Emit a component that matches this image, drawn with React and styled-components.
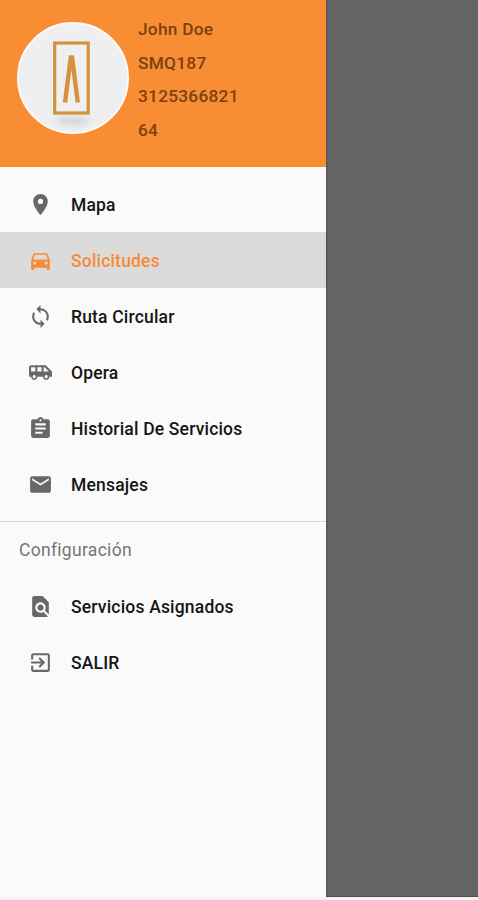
import styled, { createGlobalStyle } from "styled-components";
import {
  MdPlace, MdDirectionsCar, MdLoop, MdAirportShuttle,
  MdAssignment, MdEmail, MdFindInPage, MdExitToApp
} from "react-icons/md";

const GlobalStyle = createGlobalStyle`
  * {
    box-sizing: border-box;
  }

  body {
    margin: 0;
    background: #f2f2f2;
    font-family: Roboto, sans-serif;
  }
`;

const Screen = styled.div`
  display: flex;
  height: 897px;
  background: #646464;
  border-bottom: 1px solid #505050;
`;

const Drawer = styled.aside`
  width: 326px;
  height: 897px;
  background: #fafafa;
  box-shadow: 0 0 2px rgba(0, 0, 0, 0.5);
`;

const Header = styled.header`
  display: flex;
  gap: 9px;
  height: 167px;
  padding: 12px 0 0 17px;
  background: #f98d33;
`;

const Avatar = styled.div`
  width: 112px;
  height: 112px;
  margin-top: 9.5px;
  border: 2px solid #fffaf4;
  border-radius: 50%;
  background: #eeeff1;
  overflow: hidden;
`;

const UserInfo = styled.div`
  display: flex;
  flex-direction: column;
`;

const UserLine = styled.span`
  height: 33.7px;
  line-height: 34px;
  font-size: 17.3px;
  font-weight: 500;
  letter-spacing: 0.25px;
  color: #7a4115;
`;

const Menu = styled.nav`
  padding: ${({ $first }) => ($first ? "9px 0" : "0")};
`;

const Item = styled.a`
  display: flex;
  align-items: center;
  gap: 18.5px;
  height: 56px;
  padding: 1px 0 0 27.5px;
  font-size: 17.5px;
  font-weight: 500;
  letter-spacing: 0.18px;
  color: ${({ $active }) => ($active ? "#f68b38" : "#151515")};
  background: ${({ $active }) => ($active ? "#dbdbdb" : "transparent")};

  svg {
    width: 25px;
    height: 25px;
    color: ${({ $active }) => ($active ? "#f68b38" : "#686868")};
  }
`;

const Section = styled.div`
  height: 57px;
  padding-left: 19px;
  border-top: 1px solid #d9d9d9;
  line-height: 57px;
  font-size: 17.5px;
  letter-spacing: 0.3px;
  color: #757575;
`;

const mainItems = [
  { label: "Mapa", icon: MdPlace },
  { label: "Solicitudes", icon: MdDirectionsCar, active: true },
  { label: "Ruta Circular", icon: MdLoop },
  { label: "Opera", icon: MdAirportShuttle },
  { label: "Historial De Servicios", icon: MdAssignment },
  { label: "Mensajes", icon: MdEmail },
];

const configItems = [
  { label: "Servicios Asignados", icon: MdFindInPage },
  { label: "SALIR", icon: MdExitToApp },
];

function Logo() {
  return (
    <svg width="108" height="108" viewBox="0 0 108 108" fill="none">
      <defs>
        <filter id="soft" x="-30%" y="-100%" width="160%" height="300%">
          <feGaussianBlur stdDeviation="3" />
        </filter>
      </defs>
      <ellipse cx="54" cy="97" rx="17" ry="4" fill="#d2d3d6" filter="url(#soft)" />
      <rect x="35.7" y="19" width="33.5" height="70" stroke="#d6913a" strokeWidth="3.2" />
      <path d="M46 78.5 L52 31.5 M58.8 78.5 L52.8 31.5" stroke="#d6913a" strokeWidth="4.4" />
    </svg>
  );
}

function MenuList({ items, first }) {
  return (
    <Menu $first={first}>
      {items.map(({ label, icon: Icon, active }) => (
        <Item key={label} $active={active}>
          <Icon />
          {label}
        </Item>
      ))}
    </Menu>
  );
}

export default function App() {
  return (
    <>
      <GlobalStyle />
      <Screen>
        <Drawer>
          <Header>
            <Avatar>
              <Logo />
            </Avatar>
            <UserInfo>
              <UserLine>John Doe</UserLine>
              <UserLine>SMQ187</UserLine>
              <UserLine>3125366821</UserLine>
              <UserLine>64</UserLine>
            </UserInfo>
          </Header>
          <MenuList items={mainItems} first />
          <Section>Configuración</Section>
          <MenuList items={configItems} />
        </Drawer>
      </Screen>
    </>
  );
}
